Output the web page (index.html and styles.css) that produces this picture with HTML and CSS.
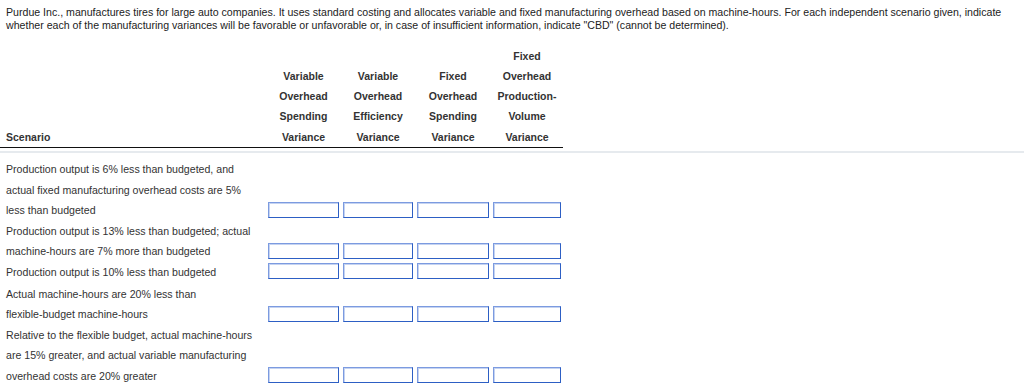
FILE: index.html
```html
<!DOCTYPE html>
<html lang="en">
<head>
<meta charset="utf-8">
<title>Overhead variances</title>
<link rel="stylesheet" href="styles.css">
</head>
<body>
<div class="question">
  <p class="prompt">Purdue Inc., manufactures tires for large auto companies. It uses standard costing and allocates variable and fixed manufacturing overhead based on machine-hours. For each independent scenario given, indicate whether each of the manufacturing variances will be favorable or unfavorable or, in case of insufficient information, indicate "CBD" (cannot be determined).</p>

  <div class="grid head">
    <div class="cell scen">Scenario</div>
    <div class="cell col">Variable<br>Overhead<br>Spending<br>Variance</div>
    <div class="cell col">Variable<br>Overhead<br>Efficiency<br>Variance</div>
    <div class="cell col">Fixed<br>Overhead<br>Spending<br>Variance</div>
    <div class="cell col">Fixed<br>Overhead<br>Production-<br>Volume<br>Variance</div>
  </div>

  <div class="divider"></div>

  <div class="grid body">
    <div class="cell scen">Production output is 6% less than budgeted, and<br>actual fixed manufacturing overhead costs are 5%<br>less than budgeted</div>
    <div class="cell inp"><input type="text" class="box"></div>
    <div class="cell inp"><input type="text" class="box"></div>
    <div class="cell inp"><input type="text" class="box"></div>
    <div class="cell inp"><input type="text" class="box"></div>

    <div class="cell scen">Production output is 13% less than budgeted; actual<br>machine-hours are 7% more than budgeted</div>
    <div class="cell inp"><input type="text" class="box"></div>
    <div class="cell inp"><input type="text" class="box"></div>
    <div class="cell inp"><input type="text" class="box"></div>
    <div class="cell inp"><input type="text" class="box"></div>

    <div class="cell scen">Production output is 10% less than budgeted</div>
    <div class="cell inp"><input type="text" class="box"></div>
    <div class="cell inp"><input type="text" class="box"></div>
    <div class="cell inp"><input type="text" class="box"></div>
    <div class="cell inp"><input type="text" class="box"></div>

    <div class="cell scen gap">Actual machine-hours are 20% less than<br>flexible-budget machine-hours</div>
    <div class="cell inp"><input type="text" class="box"></div>
    <div class="cell inp"><input type="text" class="box"></div>
    <div class="cell inp"><input type="text" class="box"></div>
    <div class="cell inp"><input type="text" class="box"></div>

    <div class="cell scen">Relative to the flexible budget, actual machine-hours<br>are 15% greater, and actual variable manufacturing<br>overhead costs are 20% greater</div>
    <div class="cell inp"><input type="text" class="box"></div>
    <div class="cell inp"><input type="text" class="box"></div>
    <div class="cell inp"><input type="text" class="box"></div>
    <div class="cell inp"><input type="text" class="box"></div>
  </div>
</div>
</body>
</html>
```

FILE: styles.css
```css
html, body {
  margin: 0;
  padding: 0;
  background: #ffffff;
}

body {
  font-family: "Liberation Sans", Arial, Helvetica, sans-serif;
  color: #333333;
  font-size: 10.6px;
}

.prompt {
  margin: 0;
  padding: 6px 6px 0 6px;
  line-height: 12.5px;
  color: #222222;
}

.grid {
  display: grid;
  grid-template-columns: 266px 75px 74px 76px 72px;
  width: 563px;
}

.head {
  margin-top: 14.5px;
  font-size: 10.5px;
  font-weight: bold;
  line-height: 20.3px;
  border-bottom: 1px solid #111111;
  align-items: end;
}

.scen {
  padding-left: 6px;
}

.col {
  text-align: center;
}

.divider {
  margin-top: 3px;
  height: 2px;
  background: #e6eaee;
}

.body {
  margin-top: 6.5px;
  line-height: 20.5px;
  align-items: end;
}

.body .scen.gap {
  padding-top: 1.5px;
}

.inp {
  display: flex;
  justify-content: center;
  padding-bottom: 3px;
}

.box {
  box-sizing: border-box;
  width: calc(100% - 4px);
  height: 16px;
  margin: 0;
  padding: 0;
  border: 1px solid #2d5fc4;
  border-top-color: #7c9be0;
  border-left-color: #7c9be0;
  box-shadow: inset 1px 1px 0 #c5d3f1;
  background: #ffffff;
  outline: none;
}
```
